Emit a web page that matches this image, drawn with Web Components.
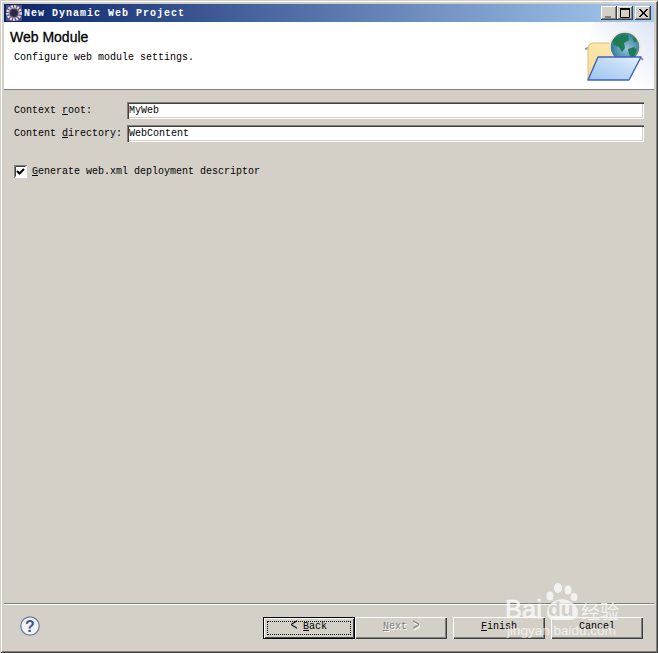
<!DOCTYPE html>
<html lang="en">
  <head>
    <meta charset="UTF-8" />
    <title>New Dynamic Web Project</title>
    <style>
      html, body { margin: 0; height: 100%; background: #d4d0c8; }
      body { font: 10px/12px "Liberation Mono", monospace; color: #000; overflow: hidden; }
      .arrow { display: inline-block; transform: scale(1.2, 1.7); font-weight: normal; }
    </style>
  </head>
  <body>
    <wiz-window>
      <wiz-titlebar slot="title">New Dynamic Web Project</wiz-titlebar>
      <wiz-banner slot="banner" heading="Web Module">Configure web module settings.</wiz-banner>

      <wiz-field value="MyWeb">Context <u>r</u>oot:</wiz-field>
      <wiz-field value="WebContent">Content <u>d</u>irectory:</wiz-field>
      <wiz-check>
        <u>G</u>enerate web.xml deployment descriptor
      </wiz-check>

      <wiz-help slot="help"></wiz-help>
      <wiz-button slot="buttons" focused><span class="arrow">&lt;</span> <u>B</u>ack</wiz-button>
      <wiz-button slot="buttons" disabled><u>N</u>ext <span class="arrow">&gt;</span></wiz-button>
      <wiz-button slot="buttons" style="margin-left: 6px"><u>F</u>inish</wiz-button>
      <wiz-button slot="buttons" style="margin-left: 6px">Cancel</wiz-button>
    </wiz-window>
    <baidu-mark></baidu-mark>

    <script>
      function define(name, css, html, init) {
        customElements.define(name, class extends HTMLElement {
          connectedCallback() {
            if (this.shadowRoot) return;
            const root = this.attachShadow({ mode: "open" });
            root.innerHTML = `<style>${css}</style>${html}`;
            if (init) init(this, root);
          }
        });
      }

      define("wiz-window", `
        :host {
          display: flex; flex-direction: column; box-sizing: border-box;
          height: 653px; width: 658px; padding: 4px;
          background: #d4d0c8;
          box-shadow: inset 1px 1px 0 #d4d0c8, inset -1px -1px 0 #404040,
            inset 2px 2px 0 #fff, inset -2px -2px 0 #808080;
        }
        .form { flex: 1; display: flex; flex-direction: column; padding: 12px 10px 0 10px; gap: 6px; }
        .foot {
          height: 46px; padding: 13px 11px 0 16px; box-sizing: border-box;
          display: flex; align-items: flex-start; justify-content: space-between;
          border-top: 1px solid #808080; box-shadow: inset 0 1px 0 #fff;
        }
        .buttons { display: flex; }
      `, `
        <slot name="title"></slot>
        <slot name="banner"></slot>
        <div class="form"><slot></slot></div>
        <div class="foot">
          <slot name="help"></slot>
          <div class="buttons"><slot name="buttons"></slot></div>
        </div>
      `);

      define("wiz-titlebar", `
        :host {
          display: flex; align-items: center; height: 18px; flex: none;
          background: linear-gradient(90deg, #0a246a, #a6caf0);
          color: #fff; font-weight: bold; letter-spacing: 1px;
        }
        svg.logo { margin: 0 2px 0 2px; flex: none; }
        .text { flex: 1; padding-top: 2px; }
        .ctl {
          width: 16px; height: 14px; box-sizing: border-box; background: #d4d0c8; flex: none;
          box-shadow: inset -1px -1px 0 #404040, inset 1px 1px 0 #fff, inset -2px -2px 0 #808080;
          display: block;
        }
      `, `
        <svg class="logo" width="16" height="16" viewBox="0 0 16 16">
          <rect width="16" height="16" fill="#5b4a86"/>
          <circle cx="8" cy="8" r="6.600" fill="none" stroke="#dcdad2" stroke-width="2.600" stroke-dasharray="2 1.100"/>
          <circle cx="8" cy="8" r="5" fill="#3b3a58" stroke="#a8a8b4"/>
          <circle cx="8" cy="8" r="3" fill="#2c2a48"/>
        </svg>
        <span class="text"><slot></slot></span>
        <svg class="ctl" viewBox="0 0 16 14"><rect x="4" y="10" width="6" height="2" fill="#808080"/></svg>
        <svg class="ctl" viewBox="0 0 16 14"><path d="M3.500 3.500h9v8h-9z" fill="none" stroke="#000"/><rect x="3" y="2" width="10" height="2"/></svg>
        <svg class="ctl" style="margin:0 3px 0 2px" viewBox="0 0 16 14"><path d="M4 3l8 8M5 3l8 8M12 3l-8 8M13 3l-8 8" stroke="#000" fill="none"/></svg>
      `);

      define("wiz-banner", `
        :host {
          display: flex; flex: none; height: 67px; background: #fff;
          border-bottom: 1px solid #808080;
        }
        .txt { flex: 1; padding: 8px 0 0 6px; }
        h1 { margin: 0 0 7px; font: 14px/15px "Liberation Sans", sans-serif; -webkit-text-stroke: .3px #000; }
        p { margin: 0 0 0 4px; }
        svg { flex: none; }
      `, `
        <div class="txt"><h1></h1><p><slot></slot></p></div>
        <svg width="75" height="67" viewBox="0 0 75 67">
          <defs>
            <linearGradient id="bg" x1="0" y1="1" x2="1" y2="0"><stop offset=".4" stop-color="#fff"/><stop offset="1" stop-color="#dde4f5"/></linearGradient>
            <linearGradient id="back" x1="0" y1="0" x2="0" y2="1"><stop offset="0" stop-color="#fbe6ad"/><stop offset="1" stop-color="#f8dc92"/></linearGradient>
            <linearGradient id="front" x1="0" y1="1" x2="1" y2="0"><stop offset="0" stop-color="#9cc4ee"/><stop offset=".6" stop-color="#c3dcf6"/><stop offset="1" stop-color="#e6f0fb"/></linearGradient>
            <radialGradient id="sea" cx=".55" cy=".55" r=".6"><stop offset="0" stop-color="#9cc4dc"/><stop offset="1" stop-color="#1d6f8c"/></radialGradient>
          </defs>
          <path d="M14 0L75 0V67H4V50Z" fill="url(#bg)"/>
          <path d="M6 27l4-1M62 36l2 2" stroke="#9a9a9a" stroke-width="2"/>
          <path d="M9 58V27q0-5 4-6h17l2 2h20v20z" fill="url(#back)" stroke="#d8be80"/>
          <circle cx="46" cy="25" r="15" fill="url(#sea)" stroke="#f5e8c0" stroke-width="1.500"/>
          <path d="M38 15q6-4 11-2l1 5-5 3 1 5-3 4-3-5-5-2-1-5zM49 27l6-2 3 3-4 9-4-5zM53 15l3 1 2 4-3 0z" fill="#1f7a56"/>
          <path d="M19 35H62L50 58H9Z" fill="url(#front)" stroke="#3f5fc0" stroke-width="1.400" stroke-linejoin="round"/>
        </svg>
      `, (el, root) => { root.querySelector("h1").textContent = el.getAttribute("heading"); });

      define("wiz-field", `
        :host { display: grid; grid-template-columns: 113px 1fr; align-items: center; height: 17px; }
        .input {
          height: 17px; box-sizing: border-box; background: #fff; padding: 3px 0 0 2px; line-height: 12px;
          box-shadow: inset 1px 1px 0 #808080, inset 2px 2px 0 #404040,
            inset -1px -1px 0 #fff, inset -2px -2px 0 #d4d0c8;
        }
      `, `
        <label><slot></slot></label>
        <div class="input"></div>
      `, (el, root) => { root.querySelector(".input").textContent = el.getAttribute("value"); });

      define("wiz-check", `
        :host { display: flex; align-items: center; gap: 5px; margin-top: 17px; height: 13px; }
        svg { flex: none; }
      `, `
        <svg width="13" height="13" viewBox="0 0 13 13">
          <rect width="13" height="13" fill="#fff"/>
          <path d="M0 13V0h13" fill="none" stroke="#808080" stroke-width="2"/>
          <path d="M1.500 11.500v-10h10" fill="none" stroke="#404040"/>
          <path d="M3 6l2.500 2.500L10 4" fill="none" stroke="#000" stroke-width="2"/>
        </svg>
        <span><slot></slot></span>
      `);

      define("wiz-help", `
        :host { display: block; width: 20px; height: 20px; margin-top: -1px; }
        svg { display: block; }
        text { font: bold 16px "Liberation Sans", sans-serif; fill: #44557f; }
      `, `
        <svg width="20" height="20" viewBox="0 0 20 20">
          <circle cx="10" cy="10" r="9.200" fill="#f2f3f7" stroke="#6b7ba3" stroke-width="1.200"/>
          <text x="10" y="15.500" text-anchor="middle">?</text>
        </svg>
      `);

      define("wiz-button", `
        :host {
          display: flex; align-items: center; justify-content: center; box-sizing: border-box;
          width: 92px; height: 22px; padding-bottom: 2px; background: #d4d0c8; position: relative;
          box-shadow: inset 1px 1px 0 #fff, inset -1px -1px 0 #404040, inset -2px -2px 0 #808080;
        }
        :host([disabled]) { color: #808080; text-shadow: 1px 1px 0 #fff; }
        :host([focused]) {
          box-shadow: inset 0 0 0 1px #000, inset 2px 2px 0 #fff, inset -2px -2px 0 #404040;
        }
        :host([focused])::after {
          content: ""; position: absolute; inset: 4px; border: 1px dotted #000;
        }
      `, `<span><slot></slot></span>`);

      define("baidu-mark", `
        :host {
          position: absolute; left: 500px; top: 575px; width: 130px; height: 68px;
          color: rgba(255,255,255,.72); pointer-events: none;
        }
        svg { position: absolute; left: 46px; top: 8px; }
        .bai { position: absolute; left: 5px; top: 20px; font: 25.500px/28px "Liberation Sans", sans-serif; -webkit-text-stroke: .6px rgba(255,255,255,.72); }
        .du { position: absolute; left: 48px; top: 22px; font: bold 21px/24px "Liberation Sans", sans-serif; color: #d4d0c8; }
        .jy { position: absolute; left: 81px; top: 25px; font: 19px/22px "Noto Sans CJK SC", sans-serif; }
        .url { position: absolute; left: 7px; top: 48px; font: 13.500px/16px "Liberation Sans", sans-serif; }
      `, `
        <svg width="33" height="38" viewBox="0 0 33 38" fill="rgba(255,255,255,.72)">
          <ellipse cx="4" cy="13" rx="3.500" ry="4.500"/>
          <ellipse cx="12" cy="5" rx="4" ry="5"/>
          <ellipse cx="22" cy="7" rx="3.500" ry="4.500"/>
          <ellipse cx="28" cy="14" rx="3.500" ry="4"/>
          <path d="M1 29q0-6 6-10 9-6 18 0 7 4 7 11 0 7-8 7H9q-8 0-8-8z"/>
        </svg>
        <span class="bai">Bai</span><span class="du">du</span><span class="jy">经验</span>
        <span class="url">jingyan.baidu.com</span>
      `);
    </script>
  </body>
</html>
